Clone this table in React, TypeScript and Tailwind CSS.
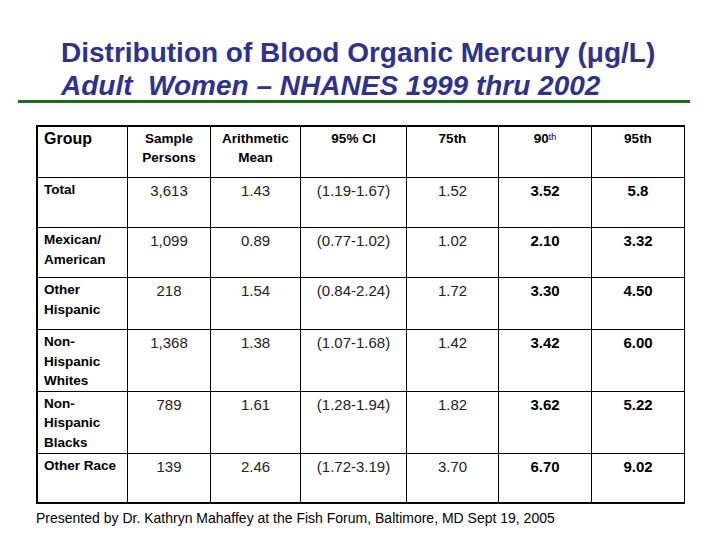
import React from "react";

type Row = {
  label: string[];
  h: string;
  vals: [string, string, string, string, string, string];
};

const rows: Row[] = [
  { label: ["Total"], h: "h-[50px]", vals: ["3,613", "1.43", "(1.19-1.67)", "1.52", "3.52", "5.8"] },
  { label: ["Mexican/", "American"], h: "h-[50px]", vals: ["1,099", "0.89", "(0.77-1.02)", "1.02", "2.10", "3.32"] },
  { label: ["Other", "Hispanic"], h: "h-[52px]", vals: ["218", "1.54", "(0.84-2.24)", "1.72", "3.30", "4.50"] },
  { label: ["Non-", "Hispanic", "Whites"], h: "h-[61px]", vals: ["1,368", "1.38", "(1.07-1.68)", "1.42", "3.42", "6.00"] },
  { label: ["Non-", "Hispanic", "Blacks"], h: "h-[62px]", vals: ["789", "1.61", "(1.28-1.94)", "1.82", "3.62", "5.22"] },
  { label: ["Other Race"], h: "h-[49px]", vals: ["139", "2.46", "(1.72-3.19)", "3.70", "6.70", "9.02"] },
];

export default function App() {
  return (
    <div
      className="w-[720px] h-[540px] bg-white relative overflow-hidden"
      style={{ fontFamily: "'Liberation Sans', Arial, sans-serif" }}
    >
      <div className="pt-[39px] pl-[61px] text-[#2e3192] font-bold text-[28px] leading-[28px]">
        <div>Distribution of Blood Organic Mercury (μg/L)</div>
        <div className="italic mt-[5px]">Adult&nbsp; Women – NHANES 1999 thru 2002</div>
      </div>
      <div className="ml-[18px] w-[672px] h-[3px] bg-[#1b6b1b]" />
      <div className="ml-[36px] mt-[22px] w-[649px] border border-black">
        <table className="table-fixed border-collapse w-full text-black">
          <colgroup>
            <col className="w-[90px]" />
            <col className="w-[83px]" />
            <col className="w-[90px]" />
            <col className="w-[106px]" />
            <col className="w-[92px]" />
            <col className="w-[93px]" />
            <col className="w-[93px]" />
          </colgroup>
          <tbody>
            <tr className="h-[51px] align-top">
              <td className="border border-black pl-[6px] pt-[2px] text-[16px] font-bold leading-[19px]">Group</td>
              <td className="border border-black pt-[2px] text-center text-[13.5px] font-bold leading-[19px]">
                Sample
                <br />
                Persons
              </td>
              <td className="border border-black pt-[2px] text-center text-[13.5px] font-bold leading-[19px]">
                Arithmetic
                <br />
                Mean
              </td>
              <td className="border border-black pt-[2px] text-center text-[13.5px] font-bold leading-[19px]">95% CI</td>
              <td className="border border-black pt-[2px] text-center text-[13.5px] font-bold leading-[19px]">75th</td>
              <td className="border border-black pt-[2px] text-center text-[13.5px] font-bold leading-[19px]">
                90<span className="text-[9px] font-normal align-top relative -top-[1px]">th</span>
              </td>
              <td className="border border-black pt-[2px] text-center text-[13.5px] font-bold leading-[19px]">95th</td>
            </tr>
            {rows.map((r, i) => (
              <tr key={i} className={`${r.h} align-top`}>
                <td className="border border-black pl-[6px] pt-[2px] text-[13.5px] font-bold leading-[19.5px]">
                  {r.label.map((l, j) => (
                    <div key={j}>{l}</div>
                  ))}
                </td>
                {r.vals.map((v, k) => (
                  <td
                    key={k}
                    className={`border border-black pt-[3px] text-center text-[15px] leading-[19px] ${
                      k >= 4 ? "font-bold" : "font-normal text-[#222]"
                    }`}
                  >
                    {v}
                  </td>
                ))}
              </tr>
            ))}
          </tbody>
        </table>
      </div>
      <div className="ml-[36px] mt-[6px] text-[14px] leading-[16px] text-black">
        Presented by Dr. Kathryn Mahaffey at the Fish Forum, Baltimore, MD Sept 19, 2005
      </div>
    </div>
  );
}
